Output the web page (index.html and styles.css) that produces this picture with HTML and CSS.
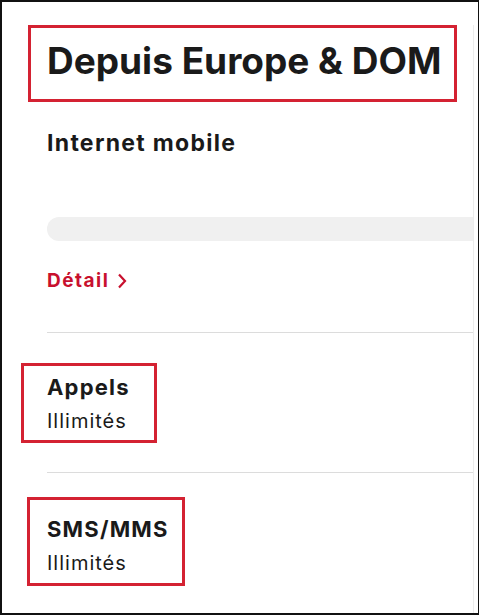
FILE: index.html
```html
<!DOCTYPE html>
<html lang="fr">
<head>
  <meta charset="UTF-8">
  <title>Depuis Europe & DOM</title>
  <meta name="viewport" content="width=device-width, initial-scale=1.0">
  <link rel="stylesheet" href="styles.css">
</head>
<body>

<div class="frame">
  <div class="card">
    <h1 class="mark mark-title">Depuis Europe &amp; DOM</h1>

    <div class="usage">
      <h2 class="usage-title">Internet mobile</h2>
      <div class="bar"></div>
      <a class="detail" href="#">Détail
        <svg width="10" height="16" viewBox="0 0 10 16"><path d="M2 1.5 L8 8 L2 14.5" fill="none" stroke="currentColor" stroke-width="2.2"/></svg>
      </a>
    </div>

    <div class="line"></div>

    <div class="mark mark-calls">
      <h3 class="item-title">Appels</h3>
      <p class="item-value">Illimités</p>
    </div>

    <div class="line line-sms"></div>

    <div class="mark mark-sms">
      <h3 class="item-title">SMS/MMS</h3>
      <p class="item-value">Illimités</p>
    </div>
  </div>
</div>

</body>
</html>
```

FILE: styles.css
```css
body {
  margin: 0;
  font-family: Inter, "Noto Sans", sans-serif;
  color: #1a1a1a;
  background: #fff;
}
.frame {
  width: 479px;
  height: 615px;
  box-sizing: border-box;
  border: 2px solid #111;
  border-right-width: 1px;
  overflow: hidden;
}
.card {
  width: 472px;
  height: 100%;
  box-sizing: border-box;
  padding-left: 45px;
  border-right: 1px solid #ececec;
}
.mark {
  box-sizing: border-box;
  border: 3px solid #d42232;
}
.mark-title {
  width: 429px;
  margin: 23px 0 0 -19px;
  padding: 11px 0 16px 16px;
  font-size: 37px;
  line-height: 44px;
  font-weight: 700;
}
.usage-title {
  margin: 26px 0 0;
  font-size: 23px;
  line-height: 30px;
  font-weight: 700;
  letter-spacing: 1.3px;
}
.bar {
  margin-top: 59px;
  height: 24px;
  background: #f0f0f0;
  border-radius: 12px 0 0 12px;
}
.detail {
  display: flex;
  align-items: center;
  gap: 8px;
  margin-top: 27px;
  font-size: 19px;
  line-height: 26px;
  font-weight: 700;
  letter-spacing: 1.5px;
  color: #c8102e;
  text-decoration: none;
}
.line {
  height: 1px;
  background: #dcdcdc;
  margin-top: 38px;
}
.mark-calls {
  width: 136px;
  margin: 30px 0 0 -26px;
  padding: 7px 0 6px 23px;
}
.line-sms {
  margin-top: 29px;
}
.mark-sms {
  width: 158px;
  margin: 24px 0 0 -20px;
  padding: 15px 0 7px 17px;
}
.item-title {
  margin: 0;
  font-size: 22px;
  line-height: 28px;
  font-weight: 700;
  letter-spacing: 1.2px;
}
.item-value {
  margin: 7px 0 0;
  font-size: 20px;
  line-height: 26px;
  font-weight: 400;
  letter-spacing: 1px;
}
```
